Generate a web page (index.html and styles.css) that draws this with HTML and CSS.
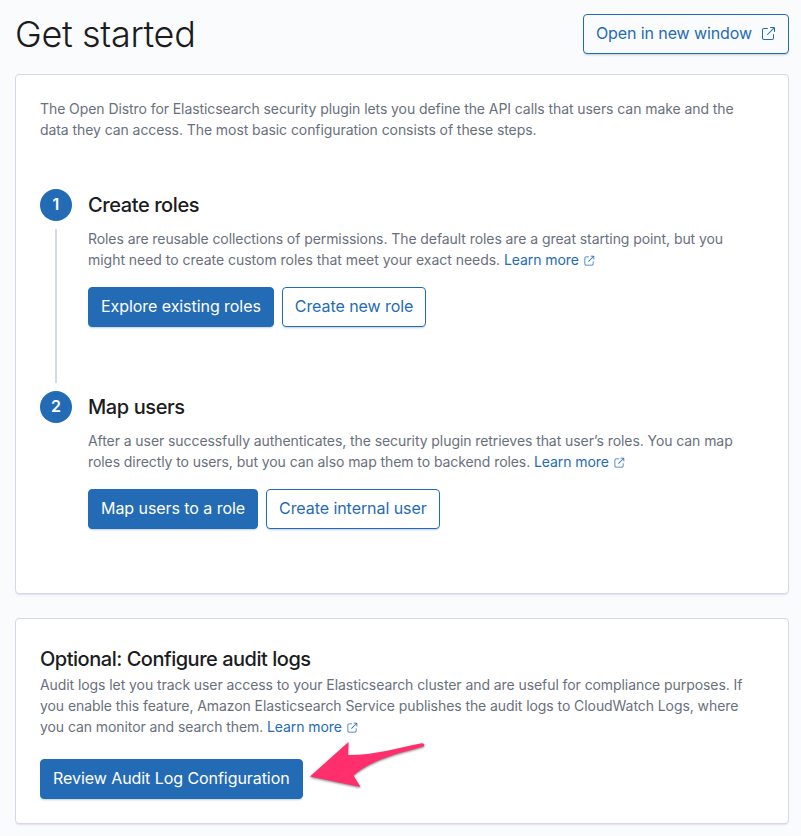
FILE: index.html
```html
<!DOCTYPE html>
<html lang="en">
<head>
    <meta charset="UTF-8">
    <title>Get started</title>
    <link rel="stylesheet" href="styles.css">
</head>
<body>
    <svg class="sprite" width="0" height="0">
        <symbol id="popout" viewBox="0 0 16 16">
            <path d="M13 8.5a.5.5 0 1 1 1 0V12a2 2 0 0 1-2 2H4a2 2 0 0 1-2-2V4a2 2 0 0 1 2-2h3.5a.5.5 0 0 1 0 1H4a1 1 0 0 0-1 1v8a1 1 0 0 0 1 1h8a1 1 0 0 0 1-1V8.5zm-5.12.339a.5.5 0 1 1-.706-.707L13.305 2H10.5a.5.5 0 1 1 0-1H14a1 1 0 0 1 1 1v3.5a.5.5 0 1 1-1 0V2.72L7.88 8.838z"/>
        </symbol>
    </svg>

    <header class="page-header">
        <h1>Get started</h1>
        <a href="#" class="button">Open in new window <svg class="icon"><use href="#popout"/></svg></a>
    </header>

    <main>
        <section class="panel">
            <p class="intro">The Open Distro for Elasticsearch security plugin lets you define the API calls that users can make and the<br>data they can access. The most basic configuration consists of these steps.</p>

            <div class="step">
                <div class="step-marker"><span class="step-number">1</span></div>
                <div class="step-body">
                    <h2>Create roles</h2>
                    <p>Roles are reusable collections of permissions. The default roles are a great starting point, but you<br><span class="loose">might need to create custom roles that meet your exact needs.</span> <a href="#" class="link">Learn more <svg class="icon-small"><use href="#popout"/></svg></a></p>
                    <div class="buttons">
                        <a href="#" class="button button-fill">Explore existing roles</a>
                        <a href="#" class="button">Create new role</a>
                    </div>
                </div>
            </div>

            <div class="step">
                <div class="step-marker"><span class="step-number">2</span></div>
                <div class="step-body">
                    <h2>Map users</h2>
                    <p>After a user successfully authenticates, the security plugin retrieves that user’s roles. You can map<br>roles directly to users, but you can also map them to backend roles. <a href="#" class="link">Learn more <svg class="icon-small"><use href="#popout"/></svg></a></p>
                    <div class="buttons">
                        <a href="#" class="button button-fill">Map users to a role</a>
                        <a href="#" class="button">Create internal user</a>
                    </div>
                </div>
            </div>
        </section>

        <section class="panel audit">
            <h2>Optional: Configure audit logs</h2>
            <p>Audit logs let you track user access to your Elasticsearch cluster and are useful for compliance purposes. If<br>you enable this feature, Amazon Elasticsearch Service publishes the audit logs to CloudWatch Logs, where<br>you can monitor and search them. <a href="#" class="link">Learn more <svg class="icon-small"><use href="#popout"/></svg></a></p>
            <div class="buttons">
                <a href="#" class="button button-fill">Review Audit Log Configuration</a>
            </div>
            <!-- pointer over the panel -->
            <svg class="arrow" viewBox="0 0 124 60">
                <path d="M4 39.5 42.5 5 42 18C66 18.500 92 11 116 6.200Q119 6.500 118 9.200C96 15.500 66 22 47.500 38.500L54.500 50Z"/>
            </svg>
        </section>
    </main>
</body>
</html>
```

FILE: styles.css
```css
* {
    box-sizing: border-box;
}
body {
    margin: 0;
    padding: 14px 12px 12px 15px;
    background: #fafbfd;
    color: #69707d;
    font-family: Inter, "Liberation Sans", sans-serif;
    font-size: 14px;
    line-height: 21px;
}
.sprite {
    display: block;
}
h1, h2, p {
    margin: 0;
}
p {
    letter-spacing: -0.075px;
}
h1 {
    color: #1a1c21;
    font-size: 36px;
    font-weight: 300;
    line-height: 40px;
    letter-spacing: -0.35px;
}
h2 {
    color: #1a1c21;
    font-size: 20px;
    font-weight: 500;
    line-height: 32px;
    letter-spacing: -0.48px;
}
.page-header {
    display: flex;
    justify-content: space-between;
    height: 40px;
    margin-bottom: 20px;
}
.panel {
    height: 520px;
    padding: 23px 24px;
    background: #fff;
    border: 1px solid #d3dae6;
    border-radius: 4px;
    box-shadow: 0 2px 2px -1px rgba(152, 162, 179, 0.3);
}
.intro {
    margin-bottom: 49px;
}
.step {
    display: flex;
    gap: 16px;
    height: 202px;
}
.step-marker {
    display: flex;
    flex-direction: column;
    align-items: center;
    gap: 8px;
    padding-bottom: 8px;
}
.step-number {
    width: 32px;
    height: 32px;
    border-radius: 50%;
    background: #246bb6;
    color: #fff;
    font-size: 16px;
    font-weight: 600;
    line-height: 31px;
    text-align: center;
}
/* line down to the next step */
.step-marker::after {
    content: "";
    flex: 1;
    width: 2px;
    background: #d3dae6;
}
.step:last-child .step-marker::after {
    display: none;
}
.step-body h2 {
    letter-spacing: -0.41px;
}
.step-body p {
    margin-top: 7px;
}
.loose {
    letter-spacing: -0.03px;
}
.buttons {
    display: flex;
    gap: 8px;
    margin-top: 17px;
}
.button {
    display: flex;
    align-items: center;
    gap: 8px;
    height: 40px;
    padding: 0 12px 1px;
    border: 1px solid #246bb6;
    border-radius: 4px;
    background: #fff;
    box-shadow: 0 2px 2px -1px rgba(54, 97, 126, 0.3);
    color: #246bb6;
    font-size: 16px;
    letter-spacing: -0.06px;
    text-decoration: none;
    white-space: nowrap;
}
.page-header .button {
    background: #fafbfd;
    letter-spacing: -0.1px;
}
.button-fill {
    background: #246bb6;
    color: #fff;
}
.link {
    color: #246bb6;
    text-decoration: none;
}
.icon {
    width: 16px;
    height: 16px;
    fill: currentColor;
}
.icon-small {
    width: 12px;
    height: 12px;
    fill: currentColor;
    vertical-align: -2px;
}
.audit {
    position: relative;
    height: 206px;
    margin-top: 24px;
    padding-top: 24px;
}
.audit p {
    margin-top: -1px;
}
.audit .buttons {
    margin-top: 22px;
}
.arrow {
    position: absolute;
    top: 118px;
    left: 290px;
    width: 124px;
    height: 60px;
    fill: #ff2f6d;
    filter: drop-shadow(0 1px 1px rgba(0, 0, 0, 0.5));
}
```
